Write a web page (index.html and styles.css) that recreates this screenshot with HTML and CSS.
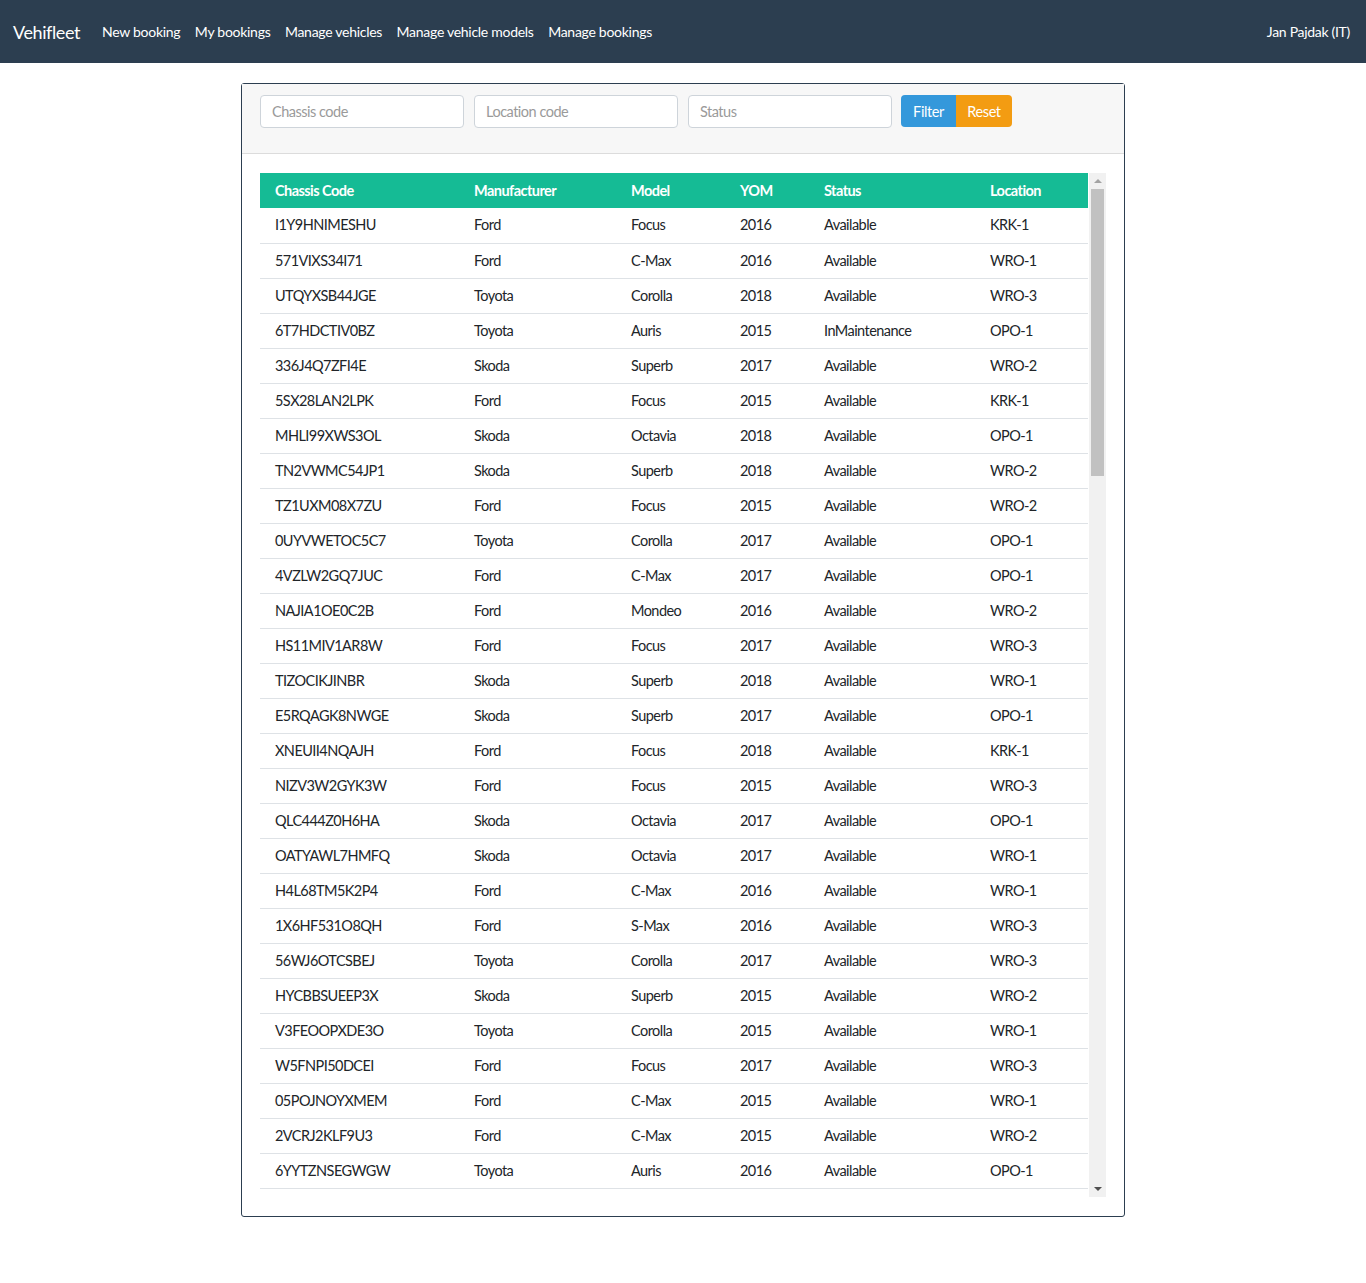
FILE: index.html
```html
<!DOCTYPE html>
<html>
<head>
<meta charset="utf-8">
<link rel="stylesheet" href="styles.css">
</head>
<body>
<nav class="navbar">
  <a class="brand">Vehifleet</a>
  <ul class="nav-links">
    <li>New booking</li>
    <li>My bookings</li>
    <li>Manage vehicles</li>
    <li>Manage vehicle models</li>
    <li>Manage bookings</li>
  </ul>
  <div class="user">Jan Pajdak (IT)</div>
</nav>
<main class="main">
  <section class="card">
    <div class="card-header">
      <input class="field" placeholder="Chassis code">
      <input class="field" placeholder="Location code">
      <input class="field" placeholder="Status">
      <div class="btn-group">
        <button class="btn btn-filter">Filter</button>
        <button class="btn btn-reset">Reset</button>
      </div>
    </div>
    <div class="card-body">
      <div class="scroll">
        <div class="table-wrap">
          <table class="table">
            <colgroup>
              <col class="c1"><col class="c2"><col class="c3"><col class="c4"><col class="c5"><col class="c6">
            </colgroup>
            <thead>
              <tr><th>Chassis Code</th><th>Manufacturer</th><th>Model</th><th>YOM</th><th>Status</th><th>Location</th></tr>
            </thead>
            <tbody>
              <tr><td>I1Y9HNIMESHU</td><td>Ford</td><td>Focus</td><td>2016</td><td>Available</td><td>KRK-1</td></tr>
              <tr><td>571VIXS34I71</td><td>Ford</td><td>C-Max</td><td>2016</td><td>Available</td><td>WRO-1</td></tr>
              <tr><td>UTQYXSB44JGE</td><td>Toyota</td><td>Corolla</td><td>2018</td><td>Available</td><td>WRO-3</td></tr>
              <tr><td>6T7HDCTIV0BZ</td><td>Toyota</td><td>Auris</td><td>2015</td><td>InMaintenance</td><td>OPO-1</td></tr>
              <tr><td>336J4Q7ZFI4E</td><td>Skoda</td><td>Superb</td><td>2017</td><td>Available</td><td>WRO-2</td></tr>
              <tr><td>5SX28LAN2LPK</td><td>Ford</td><td>Focus</td><td>2015</td><td>Available</td><td>KRK-1</td></tr>
              <tr><td>MHLI99XWS3OL</td><td>Skoda</td><td>Octavia</td><td>2018</td><td>Available</td><td>OPO-1</td></tr>
              <tr><td>TN2VWMC54JP1</td><td>Skoda</td><td>Superb</td><td>2018</td><td>Available</td><td>WRO-2</td></tr>
              <tr><td>TZ1UXM08X7ZU</td><td>Ford</td><td>Focus</td><td>2015</td><td>Available</td><td>WRO-2</td></tr>
              <tr><td>0UYVWETOC5C7</td><td>Toyota</td><td>Corolla</td><td>2017</td><td>Available</td><td>OPO-1</td></tr>
              <tr><td>4VZLW2GQ7JUC</td><td>Ford</td><td>C-Max</td><td>2017</td><td>Available</td><td>OPO-1</td></tr>
              <tr><td>NAJIA1OE0C2B</td><td>Ford</td><td>Mondeo</td><td>2016</td><td>Available</td><td>WRO-2</td></tr>
              <tr><td>HS11MIV1AR8W</td><td>Ford</td><td>Focus</td><td>2017</td><td>Available</td><td>WRO-3</td></tr>
              <tr><td>TIZOCIKJINBR</td><td>Skoda</td><td>Superb</td><td>2018</td><td>Available</td><td>WRO-1</td></tr>
              <tr><td>E5RQAGK8NWGE</td><td>Skoda</td><td>Superb</td><td>2017</td><td>Available</td><td>OPO-1</td></tr>
              <tr><td>XNEUII4NQAJH</td><td>Ford</td><td>Focus</td><td>2018</td><td>Available</td><td>KRK-1</td></tr>
              <tr><td>NIZV3W2GYK3W</td><td>Ford</td><td>Focus</td><td>2015</td><td>Available</td><td>WRO-3</td></tr>
              <tr><td>QLC444Z0H6HA</td><td>Skoda</td><td>Octavia</td><td>2017</td><td>Available</td><td>OPO-1</td></tr>
              <tr><td>OATYAWL7HMFQ</td><td>Skoda</td><td>Octavia</td><td>2017</td><td>Available</td><td>WRO-1</td></tr>
              <tr><td>H4L68TM5K2P4</td><td>Ford</td><td>C-Max</td><td>2016</td><td>Available</td><td>WRO-1</td></tr>
              <tr><td>1X6HF531O8QH</td><td>Ford</td><td>S-Max</td><td>2016</td><td>Available</td><td>WRO-3</td></tr>
              <tr><td>56WJ6OTCSBEJ</td><td>Toyota</td><td>Corolla</td><td>2017</td><td>Available</td><td>WRO-3</td></tr>
              <tr><td>HYCBBSUEEP3X</td><td>Skoda</td><td>Superb</td><td>2015</td><td>Available</td><td>WRO-2</td></tr>
              <tr><td>V3FEOOPXDE3O</td><td>Toyota</td><td>Corolla</td><td>2015</td><td>Available</td><td>WRO-1</td></tr>
              <tr><td>W5FNPI50DCEI</td><td>Ford</td><td>Focus</td><td>2017</td><td>Available</td><td>WRO-3</td></tr>
              <tr><td>05POJNOYXMEM</td><td>Ford</td><td>C-Max</td><td>2015</td><td>Available</td><td>WRO-1</td></tr>
              <tr><td>2VCRJ2KLF9U3</td><td>Ford</td><td>C-Max</td><td>2015</td><td>Available</td><td>WRO-2</td></tr>
              <tr><td>6YYTZNSEGWGW</td><td>Toyota</td><td>Auris</td><td>2016</td><td>Available</td><td>OPO-1</td></tr>
              <tr><td>&nbsp;</td><td></td><td></td><td></td><td></td><td></td></tr>
              <tr><td>&nbsp;</td><td></td><td></td><td></td><td></td><td></td></tr>
            </tbody>
          </table>
        </div>
        <div class="scrollbar">
          <div class="arrow arrow-up"></div>
          <div class="track"><div class="thumb"></div></div>
          <div class="arrow arrow-down"></div>
        </div>
      </div>
    </div>
  </section>
</main>
</body>
</html>
```

FILE: styles.css
```css
* { box-sizing: border-box; }
html, body { margin: 0; padding: 0; }
body {
  font-family: Lato, "Open Sans", "Liberation Sans", sans-serif;
  font-size: 14.5px;
  letter-spacing: -0.55px;
  color: #212529;
  background: #fff;
}
.navbar {
  height: 63px;
  background: #2c3e50;
  display: flex;
  align-items: center;
  padding: 0 16px 0 13px;
  color: #fff;
}
.brand {
  font-size: 18px;
  margin-right: 22px;
  letter-spacing: -0.4px;
  color: #fff;
}
.nav-links {
  list-style: none;
  margin: 0;
  padding: 0;
  display: flex;
  gap: 14.5px;
  flex: 1;
  font-size: 14px;
  letter-spacing: -0.28px;
}
.user {
  font-size: 14px;
  letter-spacing: -0.3px;
}
.main {
  display: flex;
  justify-content: center;
  padding-top: 20px;
}
.card {
  width: 884px;
  border: 1px solid #2c3e50;
  border-radius: 3px;
}
.card-header {
  height: 70px;
  background: #f7f7f7;
  border-bottom: 1px solid #dcdcdc;
  display: flex;
  align-items: flex-start;
  padding: 11px 18px 0 18px;
  gap: 10px;
}
.field {
  width: 204px;
  height: 33px;
  border: 1px solid #ced4da;
  border-radius: 4px;
  padding: 0 11px;
  font-family: inherit;
  font-size: 14.5px;
  letter-spacing: -0.5px;
  color: #495057;
  background: #fff;
  outline: none;
}
.field::placeholder { color: #9a9a9a; }
.btn-group { display: flex; margin-left: -1px; }
.btn {
  height: 32px;
  border: 0;
  font-family: inherit;
  font-size: 14.5px;
  letter-spacing: -0.4px;
  color: #fff;
  padding: 0;
  margin: 0;
  text-align: center;
}
.btn-filter {
  width: 55px;
  background: #3498db;
  border-radius: 4px 0 0 4px;
}
.btn-reset {
  width: 56px;
  background: #f39c12;
  border-radius: 0 4px 4px 0;
}
.card-body {
  padding: 19px 18px 19px 18px;
}
.scroll {
  display: flex;
  height: 1024px;
}
.table-wrap {
  flex: 1;
  overflow: hidden;
}
.table {
  width: 828px;
  border-collapse: collapse;
  table-layout: fixed;
}
.c1 { width: 199px; }
.c2 { width: 157px; }
.c3 { width: 109px; }
.c4 { width: 84px; }
.c5 { width: 166px; }
.c6 { width: 113px; }
.table th {
  background: #15bb95;
  color: #fff;
  font-weight: 700;
  text-align: left;
  padding: 7px 15px 7px;
  line-height: 21px;
  height: 35px;
}
.table td {
  padding: 7px 15px 7px;
  line-height: 20px;
  height: 35px;
  border-bottom: 1px solid #dee2e6;
  white-space: nowrap;
  overflow: hidden;
}
.scrollbar {
  width: 17px;
  background: #f1f1f1;
  display: flex;
  flex-direction: column;
  margin-left: 1px;
}
.arrow {
  height: 16px;
  display: flex;
  align-items: center;
  justify-content: center;
}
.arrow-up::before {
  content: "";
  border-left: 4px solid transparent;
  border-right: 4px solid transparent;
  border-bottom: 4px solid #a3a3a3;
}
.arrow-down::before {
  content: "";
  border-left: 4px solid transparent;
  border-right: 4px solid transparent;
  border-top: 4px solid #505050;
}
.track {
  flex: 1;
  padding: 0 2px;
}
.thumb {
  height: 287px;
  background: #c1c1c1;
}
```
